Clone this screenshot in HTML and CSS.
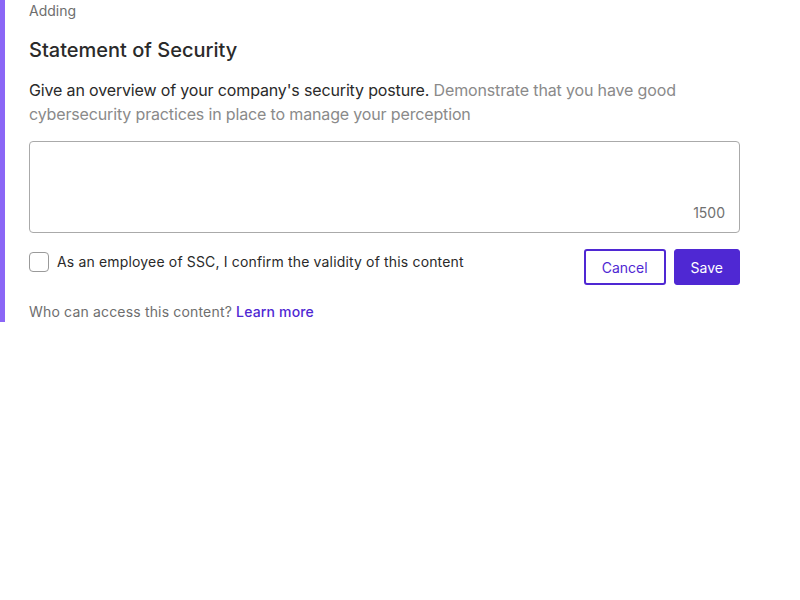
FILE: index.html
```html
<!DOCTYPE html>
<html>
<head>
<meta charset="utf-8">
<link rel="stylesheet" href="styles.css">
</head>
<body>
<div class="panel">
  <div class="eyebrow">Adding</div>
  <h2 class="title">Statement of Security</h2>
  <p class="desc"><span class="strong">Give an overview of your company's security posture.</span> Demonstrate that you have good cybersecurity practices in place to manage your perception</p>
  <div class="field">
    <textarea class="input"></textarea>
    <span class="counter">1500</span>
  </div>
  <div class="actions">
    <label class="check"><span class="box"></span><span>As an employee of SSC, I confirm the validity of this content</span></label>
    <div class="buttons">
      <button class="btn btn-outline">Cancel</button>
      <button class="btn btn-primary">Save</button>
    </div>
  </div>
  <div class="note">Who can access this content? <a class="link" href="#">Learn more</a></div>
</div>
</body>
</html>
```
FILE: styles.css
```css
html, body { margin: 0; padding: 0; background: #fff; }
body { font-family: Inter, "Noto Sans", sans-serif; color: #333; }
.panel {
  border-left: 5px solid #8b66f6;
  padding: 0 60px 0 24px;
  width: 711px;
  height: 322px;
  box-sizing: content-box;
}
.eyebrow { font-size: 14px; line-height: 22px; color: #6e6e6e; }
.title { margin: 12px 0 0; font-size: 20px; font-weight: 500; line-height: 32px; color: #2a2a2a; }
.desc { margin: 12px 0 0; font-size: 16px; line-height: 24px; color: #8a8a8a; letter-spacing: -0.15px; }
.desc .strong { color: #2a2a2a; }
.field { position: relative; margin-top: 15px; height: 92px; }
.input {
  display: block; width: 100%; height: 92px; box-sizing: border-box;
  border: 1px solid #aaa; border-radius: 4px; resize: none; outline: none;
  font-family: inherit; font-size: 14px; padding: 8px 12px;
}
.counter { position: absolute; right: 15px; bottom: 11px; font-size: 14px; line-height: 18px; color: #707070; }
.actions { display: flex; justify-content: space-between; align-items: flex-start; margin-top: 16px; }
.check { display: flex; align-items: center; gap: 8px; font-size: 14px; line-height: 20px; color: #2a2a2a; margin-top: 3px; letter-spacing: 0.16px; }
.box { width: 18px; height: 18px; border: 1px solid #9a9a9a; border-radius: 4px; box-sizing: content-box; }
.buttons { display: flex; gap: 8px; }
.btn { height: 36px; font-family: inherit; font-size: 14px; border-radius: 3px; padding: 0 16px; cursor: pointer; }
.btn-outline { background: #fff; border: 2px solid #4f28d3; color: #4f28d3; padding: 0 16px; }
.btn-primary { background: #4f28d3; border: 1px solid #4f28d3; color: #fff; }
.note { margin-top: 17px; font-size: 14px; line-height: 20px; color: #6e6e6e; letter-spacing: 0.17px; }
.link { color: #4f28d3; font-weight: 500; text-decoration: none; }
```
